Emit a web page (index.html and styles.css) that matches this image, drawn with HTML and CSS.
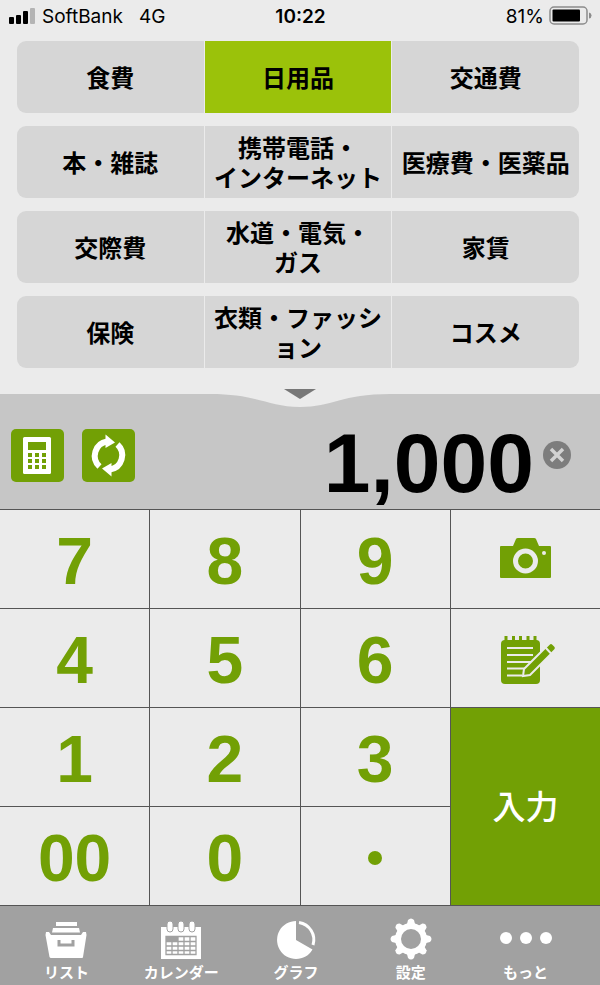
FILE: index.html
```
<!DOCTYPE html>
<html lang="ja">
<head>
  <meta charset="UTF-8">
  <meta name="viewport" content="width=device-width, initial-scale=1">
  <title>家計簿</title>
  <link rel="stylesheet" href="styles.css">
</head>
<body>

<header class="status-bar">
  <div class="carrier">
    <svg width="27" height="16" viewBox="0 0 27 16">
      <rect x="0" y="9" width="5" height="7" rx="1"/>
      <rect x="7" y="7" width="5" height="9" rx="1"/>
      <rect x="14" y="3" width="5" height="13" rx="1"/>
      <rect x="21" y="0" width="5" height="16" rx="1" fill="#b4b4b4"/>
    </svg>
    <span>SoftBank</span>
    <span class="network">4G</span>
  </div>
  <div class="clock">10:22</div>
  <div class="battery">
    <span>81%</span>
    <svg width="43" height="20" viewBox="0 0 43 20">
      <rect x="1" y="1" width="37" height="17" rx="4" fill="none" stroke="#8c8c8c" stroke-width="1.5"/>
      <rect x="3.500" y="3.500" width="27.500" height="12" rx="1"/>
      <path d="M40 6.500Q42.500 7 42.500 9.500T40 12.500z" fill="#8c8c8c"/>
    </svg>
  </div>
</header>

<main>
  <div class="categories">
    <div class="category-row">
      <button>食費</button>
      <button class="selected">日用品</button>
      <button>交通費</button>
    </div>
    <div class="category-row">
      <button>本・雑誌</button>
      <button>携帯電話・<br>インターネット</button>
      <button>医療費・医薬品</button>
    </div>
    <div class="category-row">
      <button>交際費</button>
      <button>水道・電気・<br>ガス</button>
      <button>家賃</button>
    </div>
    <div class="category-row">
      <button>保険</button>
      <button>衣類・ファッシ<br>ョン</button>
      <button>コスメ</button>
    </div>
  </div>

  <div class="display">
    <button class="pull-tab" aria-label="カテゴリーを開く">
      <svg width="180" height="20" viewBox="0 0 180 20">
        <path d="M0 5C48 5 58 18 90 18S132 5 180 5V0H0z" fill="#ebebeb"/>
        <path d="M74 0H106L90 10z" fill="#777"/>
      </svg>
    </button>

    <button class="tool" aria-label="電卓">
      <svg width="53" height="53" viewBox="0 0 53 53">
        <rect x="12" y="8" width="28" height="37" rx="1.500" fill="#fff"/>
        <g fill="#72a005">
          <rect x="17" y="13" width="18" height="8"/>
          <rect x="17" y="24" width="4" height="4"/><rect x="24" y="24" width="4" height="4"/><rect x="31" y="24" width="4" height="4"/>
          <rect x="17" y="30" width="4" height="4"/><rect x="24" y="30" width="4" height="4"/><rect x="31" y="30" width="4" height="4"/>
          <rect x="17" y="36" width="4" height="4"/><rect x="24" y="36" width="4" height="4"/><rect x="31" y="36" width="4" height="4"/>
        </g>
      </svg>
    </button>
    <button class="tool" aria-label="切り替え">
      <svg width="53" height="53" viewBox="0 0 53 53">
        <g id="arrow">
          <path d="M17.500 37.500A14.500 14.500 0 0 1 25 12.500" fill="none" stroke="#fff" stroke-width="6"/>
          <path d="M23.500 5.500L33 13.500L23.500 19z" fill="#fff"/>
        </g>
        <use href="#arrow" transform="rotate(180 26.500 26.500)"/>
      </svg>
    </button>

    <input class="amount" type="text" value="1,000" aria-label="金額">

    <button class="clear" aria-label="クリア">
      <svg width="28" height="28" viewBox="0 0 28 28">
        <circle cx="14" cy="14" r="14" fill="#7d7d7d"/>
        <path d="M8 8L20 20M20 8L8 20" stroke="#d2d2d2" stroke-width="3.500"/>
      </svg>
    </button>
  </div>

  <div class="keypad">
    <button>7</button>
    <button>8</button>
    <button>9</button>
    <button aria-label="カメラ">
      <svg width="58" height="50" viewBox="-4 -1 58 50">
        <path d="M1 9H13L16 2Q16.500 1 18 1H34Q35.500 1 36 2L39 9H50Q51 9 51 10V40Q51 41 50 41H1Q0 41 0 40V10Q0 9 1 9z" fill="#72a005"/>
        <circle cx="25.500" cy="24" r="10" fill="none" stroke="#ebebeb" stroke-width="5"/>
        <circle cx="44" cy="16" r="2" fill="#ebebeb"/>
      </svg>
    </button>
    <button>4</button>
    <button>5</button>
    <button>6</button>
    <button aria-label="メモ">
      <svg width="64" height="50" viewBox="-6 0 64 50">
        <rect x="2" y="5" width="39" height="44" rx="4" fill="#72a005"/>
        <path d="M7 1V6M14.500 1V6M21.500 1V6M29 1V6M36 1V6" stroke="#72a005" stroke-width="3"/>
        <path d="M8 13H34M8 20H34M8 27H34M8 33.500H26M8 40.500H23" stroke="#ebebeb" stroke-width="2"/>
        <path d="M24 41L25 34L50 9Q52 7 54 9L56 11Q58 13 56 15L31 40z" fill="#72a005" stroke="#ebebeb" stroke-width="2"/>
        <path d="M46 12L52 18.500" stroke="#ebebeb" stroke-width="2"/>
      </svg>
    </button>
    <button>1</button>
    <button>2</button>
    <button>3</button>
    <button class="enter">入力</button>
    <button>00</button>
    <button>0</button>
    <button aria-label="小数点"><span class="dot"></span></button>
  </div>
</main>

<nav class="tab-bar">
  <a href="#list">
    <svg width="44" height="42" viewBox="0 0 44 42">
      <g fill="#fff">
        <rect x="12" y="4" width="21" height="4"/>
        <path d="M9 10H35L36 14.500H8z"/>
        <path d="M2 14H5L7 17H37L39 14H42L42.500 17L39 39Q39 40 38 40H7Q6 40 5.500 39L1.500 17z"/>
      </g>
      <path d="M7 15.500H37" stroke="#a1a1a1"/>
      <path d="M15 22V27H29V22" fill="none" stroke="#a1a1a1" stroke-width="3"/>
    </svg>
    <span>リスト</span>
  </a>
  <a href="#calendar">
    <svg width="44" height="42" viewBox="0 0 44 42">
      <rect x="2" y="9" width="40" height="32" fill="#fff"/>
      <g fill="#fff" stroke="#a1a1a1">
        <rect x="8" y="3" width="6" height="11" rx="3"/>
        <rect x="19" y="3" width="6" height="11" rx="3"/>
        <rect x="30" y="3" width="6" height="11" rx="3"/>
      </g>
      <path d="M7 18.500H37V36.500H7zM7 23.500H37M7 28H37M7 32.500H37M13 19V37M19 19V37M25 19V37M31 19V37" fill="none" stroke="#a1a1a1" stroke-width="1.300"/>
      <rect x="7" y="18" width="12" height="6" fill="#a1a1a1"/>
    </svg>
    <span>カレンダー</span>
  </a>
  <a href="#graph">
    <svg width="44" height="42" viewBox="0 0 44 42">
      <path d="M22 22V3A19 19 0 1 0 38.500 31.500z" fill="#fff"/>
      <path d="M25 4.500A17.500 17.500 0 0 1 39 27" fill="none" stroke="#fff" stroke-width="3"/>
    </svg>
    <span>グラフ</span>
  </a>
  <a href="#settings">
    <svg width="44" height="42" viewBox="0 0 44 42">
      <g fill="#fff">
        <g id="teeth">
          <path id="tooth" d="M17 10L19 2Q22 -1 25 2L27 10V32L25 40Q22 43 19 40L17 32z"/>
          <use href="#tooth" transform="rotate(90 22 21)"/>
        </g>
        <use href="#teeth" transform="rotate(45 22 21)"/>
        <circle cx="22" cy="21" r="16"/>
      </g>
      <circle cx="22" cy="21" r="10" fill="#a1a1a1"/>
    </svg>
    <span>設定</span>
  </a>
  <a href="#more">
    <svg width="54" height="42" viewBox="0 0 54 42">
      <g fill="#fff">
        <circle cx="7" cy="20" r="6"/>
        <circle cx="27" cy="20" r="6"/>
        <circle cx="47" cy="20" r="6"/>
      </g>
    </svg>
    <span>もっと</span>
  </a>
</nav>

</body>
</html>
```
FILE: styles.css
```
* {
  box-sizing: border-box;
}

body {
  margin: 0;
  min-height: 100vh;
  display: flex;
  flex-direction: column;
  background-color: #ebebeb;
  color: #000;
  font-family: "Noto Sans CJK JP", sans-serif;
}

button {
  border: none;
  padding: 0;
  background: none;
  color: inherit;
  font: inherit;
  cursor: pointer;
}

svg {
  display: block;
}

/* Status bar */
.status-bar {
  display: grid;
  grid-template-columns: 1fr auto 1fr;
  align-items: center;
  height: 32px;
  padding: 0 8px 0 9px;
  font-family: Inter, sans-serif;
  font-size: 19px;
}

.carrier, .battery {
  display: flex;
  align-items: center;
}

.carrier {
  gap: 6px;
}

.network {
  margin-left: 10px;
}

.clock {
  font-weight: 600;
}

.battery {
  justify-content: flex-end;
  gap: 5px;
}

/* Categories */
.categories {
  display: flex;
  flex-direction: column;
  gap: 13px;
  padding: 9px 21px 26px 17px;
}

.category-row {
  display: grid;
  grid-template-columns: repeat(3, 1fr);
  gap: 1px;
  border-radius: 9px;
  overflow: hidden;
}

.category-row button {
  height: 72px;
  background-color: #d6d6d6;
  font-size: 24px;
  font-weight: 700;
  line-height: 30px;
  white-space: nowrap;
}

.category-row .selected {
  background-color: #9bc20a;
}

/* Amount display */
.display {
  position: relative;
  display: flex;
  align-items: center;
  height: 115px;
  padding: 7px 29px 0 11px;
  background-color: #c6c6c6;
}

.pull-tab {
  position: absolute;
  top: -5px;
  left: 50%;
  transform: translateX(-50%);
}

.tool {
  margin-right: 18px;
  border-radius: 5px;
  background-color: #72a005;
}

.amount {
  flex: 1;
  min-width: 0;
  margin-right: 9px;
  padding: 16px 0 0;
  border: none;
  outline: none;
  background: none;
  color: #000;
  font-family: "Liberation Sans", sans-serif;
  font-size: 84px;
  font-weight: bold;
  line-height: 90px;
  text-align: right;
}

/* Keypad */
.keypad {
  display: grid;
  grid-template-columns: repeat(4, 1fr);
  grid-auto-rows: 98px;
  gap: 1px;
  border-top: 1px solid #555;
  border-bottom: 1px solid #555;
  background-color: #555;
}

.keypad button {
  display: flex;
  align-items: center;
  justify-content: center;
  padding-top: 4px;
  background-color: #ebebeb;
  color: #72a005;
  font-family: "Liberation Sans", sans-serif;
  font-size: 66px;
  font-weight: bold;
}

.keypad .enter {
  grid-column: 4;
  grid-row: 3 / 5;
  padding: 0 0 3px;
  background-color: #72a005;
  color: #fff;
  font-family: "Noto Sans CJK JP", sans-serif;
  font-size: 33px;
  font-weight: 500;
}

.dot {
  width: 14px;
  height: 14px;
  border-radius: 50%;
  background-color: #72a005;
}

/* Tab bar */
.tab-bar {
  flex: 1;
  display: grid;
  grid-template-columns: repeat(5, 1fr);
  padding: 12px 17px 0 9px;
  background-color: #a1a1a1;
}

.tab-bar a {
  display: flex;
  flex-direction: column;
  align-items: center;
  gap: 2px;
  color: #fff;
  font-size: 15px;
  font-weight: 700;
  line-height: 20px;
  text-decoration: none;
}
```
